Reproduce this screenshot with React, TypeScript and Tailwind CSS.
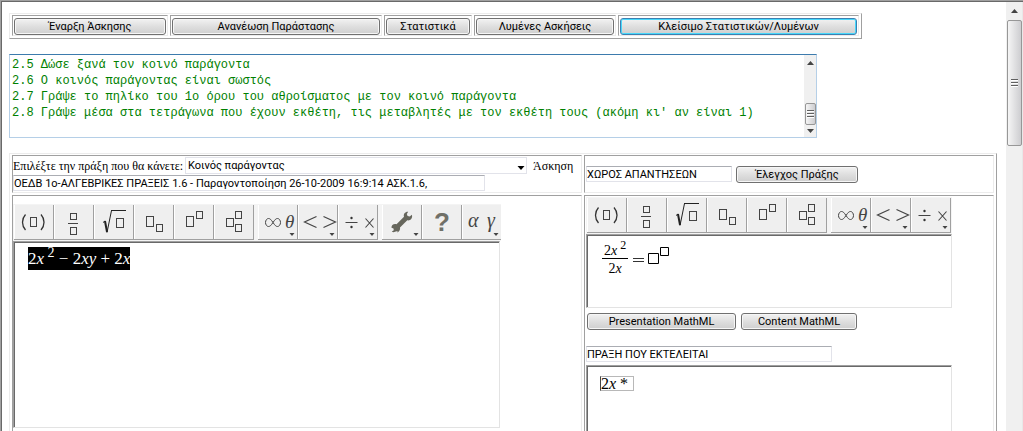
import { useState, type ReactNode } from 'react';
import clsx from 'clsx';

const LOG = [
    '2.5 Δώσε ξανά τον κοινό παράγοντα',
    '2.6 Ο κοινός παράγοντας είναι σωστός',
    '2.7 Γράψε το πηλίκο του 1ο όρου του αθροίσματος με τον κοινό παράγοντα',
    "2.8 Γράψε μέσα στα τετράγωνα που έχουν εκθέτη, τις μεταβλητές με τον εκθέτη τους (ακόμη κι' αν είναι 1)",
].join('\n');

const MENU = [
    { label: 'Έναρξη Άσκησης', width: 'w-[152px]' },
    { label: 'Ανανέωση Παράστασης', width: 'w-[208px]' },
    { label: 'Στατιστικά', width: 'w-[84px]' },
    { label: 'Λυμένες Ασκήσεις', width: 'w-[138px]' },
    { label: 'Κλείσιμο Στατιστικών/Λυμένων', width: 'w-[237px]', active: true },
];

const SANS = "font-['Roboto','Liberation_Sans',sans-serif]";
const SERIF = "font-['Liberation_Serif',serif]";
const OUTSET = 'border border-t-[#ececec] border-l-[#ececec] border-r-[#a0a0a0] border-b-[#a0a0a0]';
const INSET = 'border border-t-[#a0a0a0] border-l-[#a0a0a0] border-r-[#ececec] border-b-[#ececec]';

function WinButton({ children, className, active }: { children: ReactNode; className?: string; active?: boolean }) {
    return (
        <button
            type="button"
            className={clsx(
                'h-[17px] shrink-0 rounded-[3px] border bg-linear-to-b from-[#f2f2f2] from-0% via-[#dddddd] via-55% to-[#cfcfcf] text-[11px] leading-none text-black',
                active
                    ? 'border-[#3c7fb1] shadow-[inset_0_0_0_1px_#48d8fb]'
                    : 'border-[#707070] shadow-[inset_0_0_0_1px_#f6f6f6]',
                SANS,
                className,
            )}
        >
            {children}
        </button>
    );
}

function TextField({ label, initial, className }: { label: string; initial: string; className: string }) {
    const [value, setValue] = useState(initial);
    return (
        <input
            type="text"
            aria-label={label}
            value={value}
            onChange={(e) => setValue(e.target.value)}
            className={clsx(
                'block h-4 border border-[#e2e3ea] border-t-[#abadb3] bg-white text-[11px] leading-none text-black outline-none',
                SANS,
                className,
            )}
        />
    );
}

function Box({ x, y, w, h }: { x: number; y: number; w: number; h: number }) {
    return <rect x={x} y={y} width={w} height={h} fill="none" stroke="#444" />;
}

function Arrow() {
    return <path d="M31.5 28h5l-2.5 3z" fill="#444" />;
}

function Symbol({ x, y, size, children }: { x: number; y: number; size: number; children: string }) {
    return (
        <text x={x} y={y} fontSize={size} fontFamily="Liberation Serif, serif" fontStyle="italic" fill="#444">
            {children}
        </text>
    );
}

const ICONS: Record<string, ReactNode> = {
    Parentheses: (
        <>
            <path d="M11.5 9.5c-4 4.5-4 11 0 15.5M27 9.5c4 4.5 4 11 0 15.5" fill="none" stroke="#333" strokeWidth="1.3" />
            <Box x={16.5} y={12.5} w={6} h={9} />
        </>
    ),
    Fraction: (
        <>
            <Box x={16.5} y={8.5} w={6} h={6} />
            <path d="M14 18.5h10" stroke="#444" />
            <Box x={16.5} y={22.5} w={6} h={7} />
        </>
    ),
    'Square root': (
        <>
            <path d="M9 17.5l2-1.500M17 5.5h15" fill="none" stroke="#222" />
            <path d="M11 16l2 11" fill="none" stroke="#222" strokeWidth="2" />
            <path d="M13 27.5l4.5-22" fill="none" stroke="#222" />
            <Box x={22.5} y={13.5} w={7} h={9} />
        </>
    ),
    Subscript: (
        <>
            <Box x={12.5} y={11.5} w={7} h={10} />
            <Box x={22.5} y={19.5} w={6} h={7} />
        </>
    ),
    Superscript: (
        <>
            <Box x={12.5} y={11.5} w={7} h={10} />
            <Box x={22.5} y={6.5} w={6} h={7} />
        </>
    ),
    'Subscript and superscript': (
        <>
            <Box x={12.5} y={13.5} w={7} h={8} />
            <Box x={21.5} y={6.5} w={6} h={7} />
            <Box x={21.5} y={19.5} w={6} h={7} />
        </>
    ),
    Symbols: (
        <>
            <path
                d="M15 17.5c-2-3-3-4-4.5-4s-3 1.7-3 4 1.5 4 3 4 2.5-1 4.5-4 3-4 4.5-4 3 1.7 3 4-1.5 4-3 4-2.5-1-4.5-4z"
                fill="none"
                stroke="#444"
            />
            <Symbol x={27} y={23} size={19}>θ</Symbol>
            <Arrow />
        </>
    ),
    Relations: (
        <>
            <path d="M18.5 11.5L6.5 17l12 5.5M25.5 11.5l12 5.5-12 5.5" fill="none" stroke="#444" strokeWidth="1.2" />
            <Arrow />
        </>
    ),
    Operators: (
        <>
            <path d="M7.5 17.5h12M27.5 13.5l8 9M35.5 13.5l-8 9" fill="none" stroke="#444" strokeWidth="1.1" />
            <circle cx="13.5" cy="13" r="1.2" fill="#333" />
            <circle cx="13.5" cy="22" r="1.2" fill="#333" />
            <Arrow />
        </>
    ),
    Tools: (
        <>
            <path
                d="M13 26.8c-1.2.6-2.400.4-3.200-.3l2-1.300-.3-1.700-2-.8c-.3-2.500 2.300-4.500 5-3.500l7.500-7.500c-.8-2.700 1-5.200 4.200-5l-1.400 2.300.8 2 2.200.4 2-1.700c1.300 3.300-1.500 6.300-4.500 5.600l-7.300 7.300c.5 2-.7 4.500-3 4.900l.7-1.500z"
                fill="#66665c"
            />
            <Arrow />
        </>
    ),
    Help: (
        <text x="12" y="26" fontSize="26" fontWeight="700" fontFamily="Liberation Sans, sans-serif" fill="#707068">
            ?
        </text>
    ),
    'Greek letters': (
        <>
            <Symbol x={6} y={22} size={20}>α</Symbol>
            <Symbol x={25} y={22} size={20}>γ</Symbol>
            <Arrow />
        </>
    ),
};

const TEMPLATES = ['Parentheses', 'Fraction', 'Square root', 'Subscript', 'Superscript', 'Subscript and superscript'];
const PALETTES = ['Symbols', 'Relations', 'Operators'];
const EXTRAS = ['Tools', 'Help', 'Greek letters'];

function MathToolbar({ groups, className }: { groups: string[][]; className: string }) {
    return (
        <div className={clsx('flex gap-1 overflow-hidden bg-[#f4f4f4] pt-px pb-px pl-px', className)}>
            {groups.map((group) => (
                <div key={group[0]} className="flex">
                    {group.map((name) => (
                        <button
                            key={name}
                            type="button"
                            title={name}
                            className="h-[35px] w-10 border-r border-b border-[#a0a0a0] bg-[#efefef] shadow-[inset_1px_0_#ffffff]"
                        >
                            <svg width="39" height="34" viewBox="0 0 39 34" aria-hidden="true">
                                {ICONS[name]}
                            </svg>
                        </button>
                    ))}
                </div>
            ))}
        </div>
    );
}

function Editor({ className, children }: { className: string; children: ReactNode }) {
    return (
        <div className={clsx('border border-[#e3e3e3] border-t-[#a0a0a0] border-l-[#a0a0a0]', className)}>
            <div className="h-full border-t border-l border-[#696969] bg-white">{children}</div>
        </div>
    );
}

function ScrollThumb({ className }: { className: string }) {
    return (
        <div
            className={clsx(
                'flex flex-col items-center justify-center gap-px rounded-xs border border-[#979797] bg-linear-to-r from-[#f5f5f5] to-[#cdcdd0]',
                className,
            )}
        >
            {[0, 1, 2].map((i) => (
                <div key={i} className="h-0.5 w-[7px] border-b border-white bg-[#606060]" />
            ))}
        </div>
    );
}

function Triangle({ down, wide }: { down?: boolean; wide?: boolean }) {
    const width = wide ? 8 : 7;
    return (
        <svg width={width} height="4" viewBox="0 0 7 4" aria-hidden="true" className="shrink-0">
            <path d={down ? 'M0 0h7L3.5 4z' : 'M0 4h7L3.5 0z'} fill={wide ? '#000' : '#444'} />
        </svg>
    );
}

export default function App() {
    const [log, setLog] = useState(LOG);

    return (
        <div className="flex h-screen overflow-hidden border-t border-l border-[#a0a0a0] bg-white text-black">
            <div className="flex min-w-0 flex-1 border-t border-l border-[#696969]">
                <main className="min-w-0 flex-1 overflow-hidden pt-[11px] pr-[9px] pl-[7px]">
                    <div className={clsx('flex w-fit gap-0.5 p-0.5 pt-px', OUTSET)}>
                        {MENU.map((item) => (
                            <div key={item.label} className={clsx('px-px pt-0.5', INSET)}>
                                <WinButton className={clsx('block', item.width)} active={item.active}>
                                    {item.label}
                                </WinButton>
                            </div>
                        ))}
                    </div>

                    <div className="mt-[15px] flex h-[84px] w-[808px] border border-[#b5cfe7] border-t-[#3d7bad]">
                        <textarea
                            aria-label="Βήματα"
                            value={log}
                            onChange={(e) => setLog(e.target.value)}
                            className="min-w-0 flex-1 resize-none overflow-hidden pt-0.5 pl-0.5 font-['Liberation_Mono',monospace] text-xs leading-4 whitespace-pre text-[#008000] outline-none"
                        />
                        <div className="flex w-3 flex-col items-center bg-[#f0f0f0] pt-1.5 pb-1">
                            <Triangle />
                            <ScrollThumb className="mt-auto mb-1 h-[22px] w-[11px]" />
                            <Triangle down />
                        </div>
                    </div>

                    <div className={clsx('mt-[15px] grid grid-cols-[570px_minmax(0,1fr)] gap-0.5 p-0.5 pt-px', OUTSET)}>
                        <div className={clsx('py-px', INSET)}>
                            <div className={clsx('mb-px flex items-center text-xs leading-none', SERIF)}>
                                <label htmlFor="operation" className="w-[172px] whitespace-nowrap">
                                    Επιλέξτε την πράξη που θα κάνετε:
                                </label>
                                <div className="relative w-[342px]">
                                    <select
                                        id="operation"
                                        className={clsx(
                                            'block h-[17px] w-full appearance-none border border-[#e2e3ea] bg-white pl-0.5 text-[11px] leading-none',
                                            SANS,
                                        )}
                                    >
                                        <option>Κοινός παράγοντας</option>
                                    </select>
                                    <span className="pointer-events-none absolute top-[9px] right-0.5">
                                        <Triangle down wide />
                                    </span>
                                </div>
                                <span className="ml-1.5">Άσκηση</span>
                            </div>
                            <TextField
                                label="Άσκηση"
                                initial="ΟΕΔΒ 1ο-ΑΛΓΕΒΡΙΚΕΣ ΠΡΑΞΕΙΣ 1.6 - Παραγοντοποίηση 26-10-2009 16:9:14 ΑΣΚ.1.6,"
                                className="w-[472px]"
                            />
                        </div>

                        <div className={clsx('flex items-center gap-1 pl-px', INSET)}>
                            <TextField label="Απαντήσεις" initial="ΧΩΡΟΣ ΑΠΑΝΤΗΣΕΩΝ" className="w-[146px]" />
                            <WinButton className="w-[122px]">Έλεγχος Πράξης</WinButton>
                        </div>

                        <div className={clsx('min-h-[280px] pt-2', INSET)}>
                            <MathToolbar groups={[TEMPLATES, PALETTES, EXTRAS]} className="w-[488px]" />
                            <Editor className="h-[187px] w-[487px]">
                                <div className={clsx('mt-1 ml-[13px] w-fit bg-black text-[17px] leading-[23px] text-white', SERIF)}>
                                    2<i>x</i>
                                    <sup className="text-sm leading-none"> 2</sup> − 2<i>xy</i> + 2<i>x</i>
                                </div>
                            </Editor>
                        </div>

                        <div className={clsx('pt-px pl-px', INSET)}>
                            <MathToolbar groups={[TEMPLATES, PALETTES]} className="w-[366px]" />
                            <Editor className="h-[74px] w-[366px]">
                                <div className={clsx('ml-3.5 flex items-start gap-1 pt-[7px]', SERIF)}>
                                    <div className="text-center text-sm leading-4">
                                        <div className="h-4 border-b border-black px-0.5">
                                            2<i>x</i>
                                            <sup className="text-xs leading-none"> 2</sup>
                                        </div>
                                        <div className="leading-5">
                                            2<i>x</i>
                                        </div>
                                    </div>
                                    <svg
                                        width="38"
                                        height="28"
                                        viewBox="0 0 38 28"
                                        aria-hidden="true"
                                        fill="none"
                                        stroke="#000"
                                        className="mt-[3px]"
                                    >
                                        <path d="M1 12.5h11M1 15.5h11" stroke="#333" />
                                        <path d="M16.5 7.5h10v10h-10zM28.5 1.5h8v8h-8z" />
                                    </svg>
                                </div>
                            </Editor>
                            <div className="mt-[5px] flex gap-[5px] pl-px">
                                <WinButton className="w-[149px]">Presentation MathML</WinButton>
                                <WinButton className="w-[116px]">Content MathML</WinButton>
                            </div>
                            <TextField label="Πράξη" initial="ΠΡΑΞΗ ΠΟΥ ΕΚΤΕΛΕΙΤΑΙ" className="mt-4 mb-[3px] w-[246px]" />
                            <Editor className="h-[74px] w-[366px]">
                                <div className="pt-[9px] pl-3">
                                    <div
                                        className={clsx(
                                            'w-[34px] border border-l-[#444444] border-[#b8b8b8] text-base leading-[13px] whitespace-nowrap',
                                            SERIF,
                                        )}
                                    >
                                        2<i>x</i> *
                                    </div>
                                </div>
                            </Editor>
                        </div>
                    </div>
                </main>

                <div className="flex w-[17px] flex-col items-center border-r border-[#e8e8e8] bg-[#f0f0f0] pt-[7px]">
                    <Triangle />
                    <ScrollThumb className="mt-[7px] h-[126px] w-[15px]" />
                </div>
            </div>
        </div>
    );
}
